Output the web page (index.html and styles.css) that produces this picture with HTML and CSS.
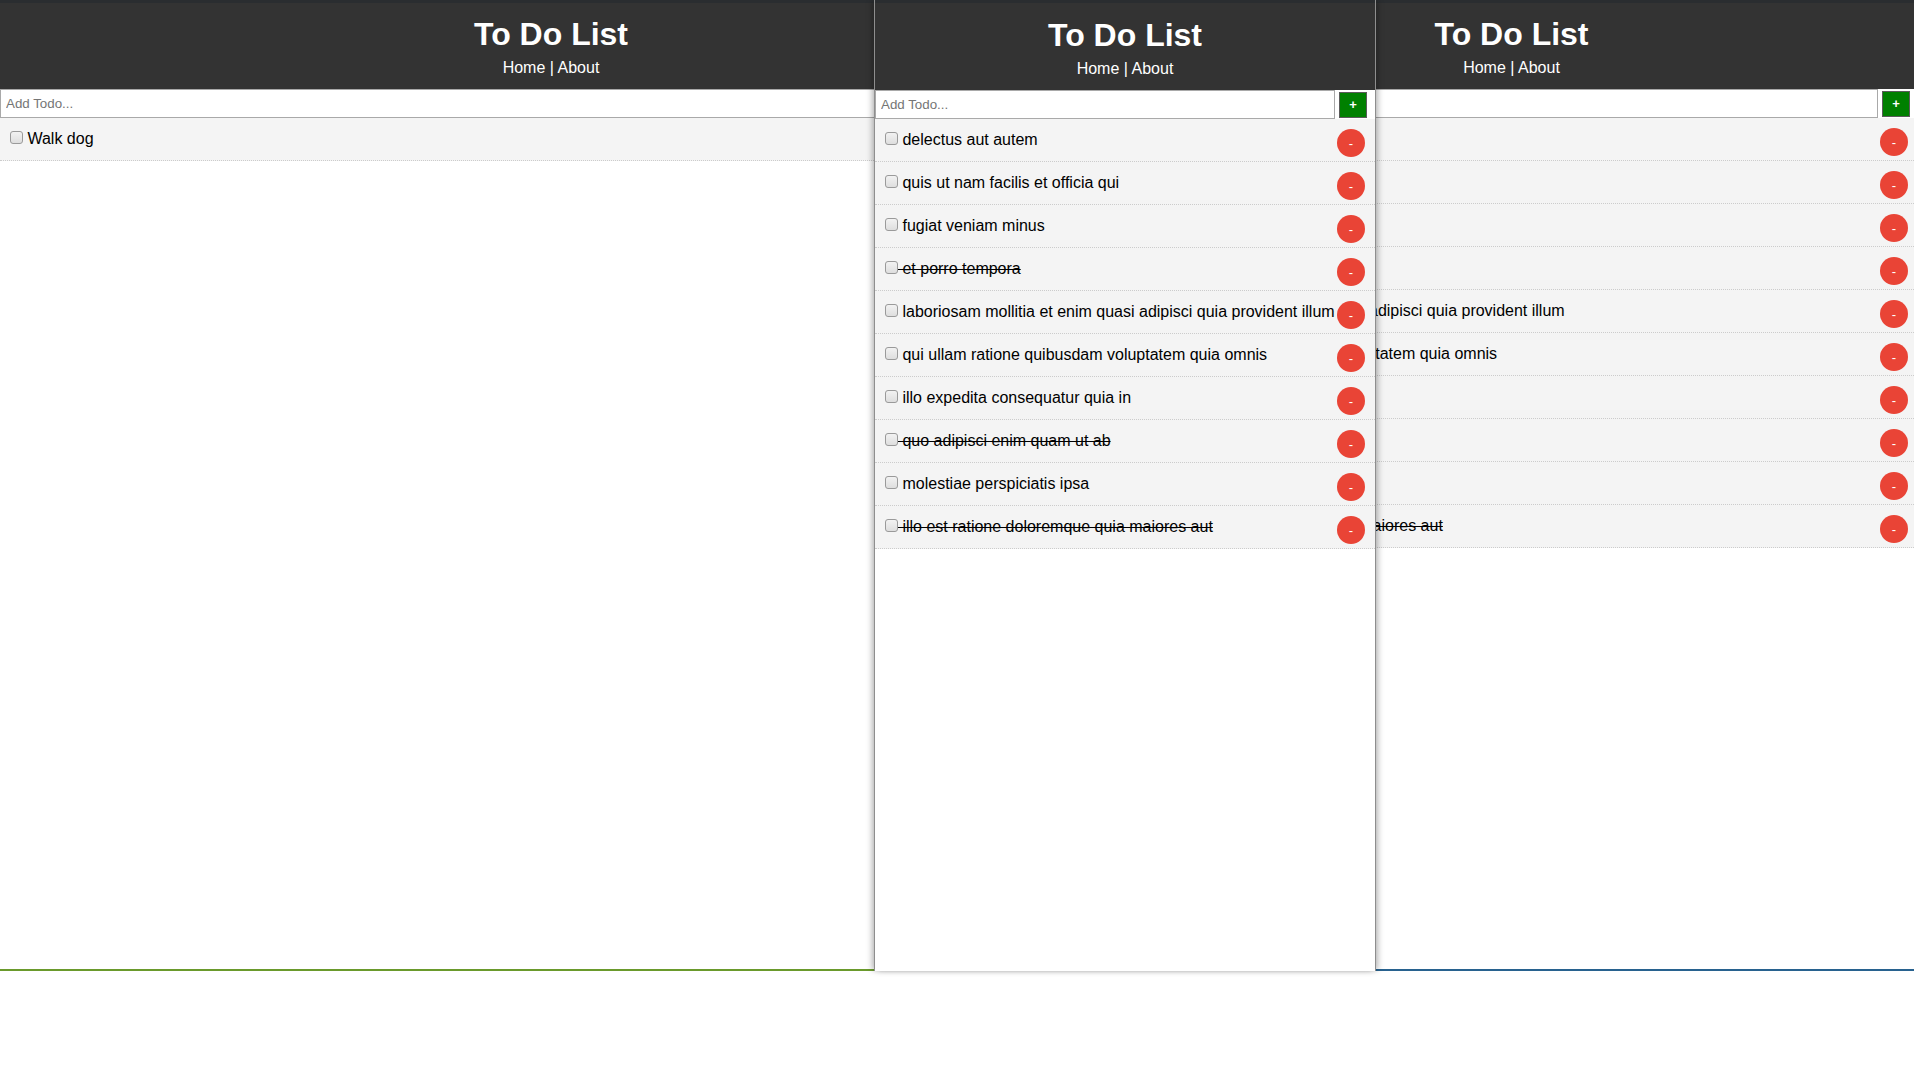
FILE: index.html
```html
<!DOCTYPE html>
<html lang="en">
<head>
<meta charset="utf-8">
<title>To Do List</title>
<link rel="stylesheet" href="styles.css">
</head>
<body>
<div class="desk">

  <div class="win win-left">
    <div class="app">
      <header class="header">
        <h1 class="title">To Do List</h1>
        <div class="nav"><a class="nav-link" href="#">Home</a> | <a class="nav-link" href="#">About</a></div>
      </header>
      <form class="add-form">
        <input class="add-input" type="text" placeholder="Add Todo...">
        <button class="add-btn" type="button">+</button>
      </form>
      <div class="todos">
        <p class="todo"><button class="del" type="button">-</button><input class="check" type="checkbox"> Walk dog</p>
      </div>
    </div>
  </div>

  <div class="win win-right">
    <div class="app app-right">
      <header class="header">
        <h1 class="title">To Do List</h1>
        <div class="nav"><a class="nav-link" href="#">Home</a> | <a class="nav-link" href="#">About</a></div>
      </header>
      <form class="add-form">
        <input class="add-input" type="text" placeholder="Add Todo...">
        <button class="add-btn" type="button">+</button>
      </form>
      <div class="todos">
        <p class="todo"><button class="del" type="button">-</button><input class="check" type="checkbox"> delectus aut autem</p>
        <p class="todo"><button class="del" type="button">-</button><input class="check" type="checkbox"> quis ut nam facilis et officia qui</p>
        <p class="todo"><button class="del" type="button">-</button><input class="check" type="checkbox"> fugiat veniam minus</p>
        <p class="todo done"><button class="del" type="button">-</button><input class="check" type="checkbox"> et porro tempora</p>
        <p class="todo"><button class="del" type="button">-</button><input class="check" type="checkbox"> laboriosam mollitia et enim quasi adipisci quia provident illum</p>
        <p class="todo"><button class="del" type="button">-</button><input class="check" type="checkbox"> qui ullam ratione quibusdam voluptatem quia omnis</p>
        <p class="todo"><button class="del" type="button">-</button><input class="check" type="checkbox"> illo expedita consequatur quia in</p>
        <p class="todo done"><button class="del" type="button">-</button><input class="check" type="checkbox"> quo adipisci enim quam ut ab</p>
        <p class="todo"><button class="del" type="button">-</button><input class="check" type="checkbox"> molestiae perspiciatis ipsa</p>
        <p class="todo done"><button class="del" type="button">-</button><input class="check" type="checkbox"> illo est ratione doloremque quia maiores aut</p>
      </div>
    </div>
  </div>

  <div class="win win-mid">
    <div class="app">
      <header class="header header-mid">
        <h1 class="title">To Do List</h1>
        <div class="nav"><a class="nav-link" href="#">Home</a> | <a class="nav-link" href="#">About</a></div>
      </header>
      <form class="add-form">
        <input class="add-input" type="text" placeholder="Add Todo...">
        <button class="add-btn" type="button">+</button>
      </form>
      <div class="todos">
        <p class="todo"><button class="del" type="button">-</button><input class="check" type="checkbox"> delectus aut autem</p>
        <p class="todo"><button class="del" type="button">-</button><input class="check" type="checkbox"> quis ut nam facilis et officia qui</p>
        <p class="todo"><button class="del" type="button">-</button><input class="check" type="checkbox"> fugiat veniam minus</p>
        <p class="todo done"><button class="del" type="button">-</button><input class="check" type="checkbox"> et porro tempora</p>
        <p class="todo"><button class="del" type="button">-</button><input class="check" type="checkbox"> laboriosam mollitia et enim quasi adipisci quia provident illum</p>
        <p class="todo"><button class="del" type="button">-</button><input class="check" type="checkbox"> qui ullam ratione quibusdam voluptatem quia omnis</p>
        <p class="todo"><button class="del" type="button">-</button><input class="check" type="checkbox"> illo expedita consequatur quia in</p>
        <p class="todo done"><button class="del" type="button">-</button><input class="check" type="checkbox"> quo adipisci enim quam ut ab</p>
        <p class="todo"><button class="del" type="button">-</button><input class="check" type="checkbox"> molestiae perspiciatis ipsa</p>
        <p class="todo done"><button class="del" type="button">-</button><input class="check" type="checkbox"> illo est ratione doloremque quia maiores aut</p>
      </div>
    </div>
  </div>

</div>
</body>
</html>
```
FILE: styles.css
```css
* {
  box-sizing: border-box;
  margin: 0;
  padding: 0;
}

html, body {
  background: #fff;
}

body {
  font-family: "Liberation Sans", Arial, Helvetica, sans-serif;
  line-height: 1.4;
  color: #000;
  width: 1920px;
  height: 1079px;
  overflow: hidden;
}

.desk {
  position: relative;
  width: 1920px;
  height: 1079px;
}

/* windows on the desktop */
.win {
  position: absolute;
  top: 0;
  height: 971px;
  background: #fff;
  overflow: hidden;
}

.win-left {
  left: 0;
  width: 1102px;
  border-bottom: 2px solid #6a9a2c;
}

.win-right {
  left: 1105px;
  width: 809px;
  border-bottom: 2px solid #28628f;
}

.app-right {
  width: 813px;
}

.win-mid {
  left: 874px;
  width: 502px;
  height: 971px;
  border-left: 1px solid #8e8e8e;
  border-right: 1px solid #8e8e8e;
  box-shadow: -3px 0 6px -1px rgba(0, 0, 0, 0.28), 3px 0 6px -1px rgba(0, 0, 0, 0.28);
  z-index: 2;
}

/* app */
.header {
  background: #333;
  color: #fff;
  text-align: center;
  border-top: 3px solid #2a2d30;
  padding: 10px 10px 10px;
}

.header-mid {
  padding-top: 11px;
}

.title {
  font-size: 32px;
  font-weight: bold;
  line-height: 43.8px;
}

.nav {
  font-size: 16px;
  line-height: 22.4px;
}

.nav-link {
  color: #fff;
  text-decoration: none;
}

.add-form {
  display: flex;
  align-items: center;
  background: #fff;
  height: 29px;
}

.add-input {
  flex: 1;
  min-width: 0;
  height: 29px;
  border: 1px solid #a9a9a9;
  padding: 0 5px;
  font-family: "Liberation Sans", Arial, sans-serif;
  font-size: 13.33px;
  color: #000;
  background: #fff;
  outline: none;
}

.add-input::placeholder {
  color: #757575;
}

.add-btn {
  flex: none;
  width: 28px;
  height: 26px;
  margin: 1px 8px 0 4px;
  background: #008000;
  border: 1px solid #5b5b5b;
  color: #fff;
  font-family: "Liberation Sans", Arial, sans-serif;
  font-size: 13px;
  font-weight: bold;
  line-height: 24px;
  text-align: center;
}

.todo {
  background: #f4f4f4;
  padding: 10px;
  border-bottom: 1px dotted #ccc;
  font-size: 16px;
  line-height: 22px;
  white-space: nowrap;
}

.todo.done {
  text-decoration: line-through;
}

.check {
  appearance: none;
  -webkit-appearance: none;
  display: inline-block;
  width: 13px;
  height: 13px;
  margin: 0;
  border: 1px solid #9a9a9a;
  border-radius: 3px;
  background: linear-gradient(#f2f2f2, #dedede);
  vertical-align: baseline;
}

.del {
  float: right;
  width: 28px;
  height: 28px;
  border: none;
  border-radius: 50%;
  background: #e94436;
  color: #fff;
  font-family: "Liberation Sans", Arial, sans-serif;
  font-size: 13px;
  line-height: 30px;
  text-align: center;
}
```
